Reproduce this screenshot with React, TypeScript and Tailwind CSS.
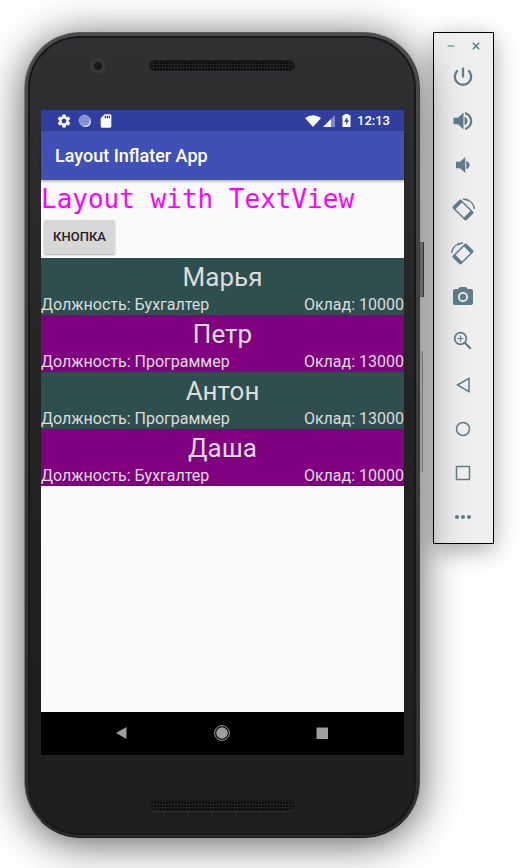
import React from "react";
import { MdPhotoCamera, MdSettings, MdSdCard, MdMoreHoriz } from "react-icons/md";

type Employee = { name: string; position: string; salary: number };

const employees: Employee[] = [
  { name: "Марья", position: "Бухгалтер", salary: 10000 },
  { name: "Петр", position: "Программер", salary: 13000 },
  { name: "Антон", position: "Программер", salary: 13000 },
  { name: "Даша", position: "Бухгалтер", salary: 10000 },
];

function SpeakerGrille() {
  return (
    <div className="h-3 w-[146px] rounded-full border-b border-[#333] bg-[#181818] p-0.5">
      <svg className="block h-2 w-full" aria-hidden="true">
        <defs>
          <pattern id="holes" width="3" height="3" patternUnits="userSpaceOnUse">
            <rect width="3" height="3" fill="#222" />
            <rect width="2" height="2" fill="#0b0b0b" />
          </pattern>
        </defs>
        <rect width="100%" height="8" rx="4" fill="url(#holes)" />
      </svg>
    </div>
  );
}

function StatusBar() {
  return (
    <div className="flex h-[21px] items-center justify-between bg-[#303f9f] pr-3.5 pl-[15px] text-white">
      <div className="flex items-center gap-1.5">
        <MdSettings size={16} />
        <svg width="14" height="14" viewBox="0 0 14 14">
          <circle cx="7.5" cy="7.5" r="5.5" fill="#d6daf4" />
          <circle cx="6.5" cy="6.5" r="5.3" fill="#858fcb" stroke="#a9b0de" />
        </svg>
        <MdSdCard size={16} />
      </div>
      <div className="flex items-center">
        <svg width="16" height="12" viewBox="0 0 16 12">
          <path d="M0 3Q8-2.6 16 3L8 12Z" fill="#fff" />
        </svg>
        <svg className="ml-0.5" width="12" height="12" viewBox="0 0 12 12">
          <path d="M12 0V12H0Z" fill="#7f88c8" />
          <path d="M8 4V12H0Z" fill="#fff" />
        </svg>
        <svg className="ml-[7px]" width="9" height="13" viewBox="0 0 9 13">
          <path d="M2.500 0H6.500V1.300H8.500V13H0.500V1.300H2.500Z" fill="#fff" />
          <path d="M5.300 3L2 7.700H4.200V11L7 6.300H5.300Z" fill="#303f9f" />
        </svg>
        <span className="ml-1.5 text-[13px] leading-5 font-medium">12:13</span>
      </div>
    </div>
  );
}

function EmployeeRow({ employee, color }: { employee: Employee; color: string }) {
  return (
    <li className={`${color} pb-px text-[#dcdcdc]`}>
      <h2 className="text-center text-[26px] leading-[38px]">{employee.name}</h2>
      <div className="flex justify-between text-base leading-[18px]">
        <span>Должность: {employee.position}</span>
        <span>Оклад: {employee.salary}</span>
      </div>
    </li>
  );
}

function NavigationBar() {
  return (
    <nav className="flex h-[43px] items-center justify-center gap-21 bg-black pr-px pb-px">
      <button aria-label="Back">
        <svg width="16" height="16" viewBox="0 0 16 16">
          <path d="M2 8L12.500 2V14Z" fill="#9e9e9e" />
        </svg>
      </button>
      <button aria-label="Home">
        <svg width="16" height="16" viewBox="0 0 16 16">
          <circle cx="8" cy="8" r="7.400" fill="none" stroke="#9e9e9e" />
          <circle cx="8" cy="8" r="5.800" fill="#9e9e9e" />
        </svg>
      </button>
      <button aria-label="Overview">
        <svg width="16" height="16" viewBox="0 0 16 16">
          <rect x="2.500" y="2.500" width="11.500" height="11.500" rx="0.500" fill="#9e9e9e" />
        </svg>
      </button>
    </nav>
  );
}

function Screen() {
  return (
    <div className="flex flex-1 flex-col bg-[#fafafa]">
      <StatusBar />
      <header className="z-10 flex h-[49px] items-center bg-[#3f51b5] pl-3.5 text-white shadow-[0_1px_3px_rgba(0,0,0,0.4)]">
        <h1 className="text-lg font-medium">Layout Inflater App</h1>
      </header>
      <p className="font-['DejaVu_Sans_Mono',monospace] text-[26px] leading-[39px] whitespace-nowrap text-[#ff00ff]">
        Layout with TextView
      </p>
      <div className="px-[3px] pt-px pb-1">
        <button className="h-[34px] w-[71px] rounded-xs bg-[#d6d7d7] text-[13px] font-medium text-[#212121] shadow-[0_1px_2px_rgba(0,0,0,0.3)]">
          КНОПКА
        </button>
      </div>
      <ul className="flex-1">
        {employees.map((employee, i) => (
          <EmployeeRow
            key={employee.name}
            employee={employee}
            color={i % 2 === 0 ? "bg-[#2f4f4f]" : "bg-[#800080]"}
          />
        ))}
      </ul>
      <NavigationBar />
    </div>
  );
}

function Phone() {
  return (
    <div className="relative flex min-h-[806px] min-w-0 flex-1 flex-col rounded-[56px] border border-t-[#5a5a5a] border-r-[#3f3c3d] border-b-[#1a1a1a] border-l-[#777] bg-linear-to-b from-[#4c4c4c] via-[#3d3b3c] to-[#2c2c2c] px-[3px] pt-[3px] pb-0.5 shadow-[0_5px_42px_rgba(0,0,0,0.65)]">
      <div className="absolute top-[209px] -right-[5px] h-[55px] w-1 border-r border-[#333] bg-[#666]" />
      <div className="absolute top-[318px] -right-1 h-[121px] w-[3px] border-r border-[#777] bg-[#999]" />
      <div className="relative flex flex-1 flex-col rounded-[52px] border-2 border-[#181818] bg-linear-to-b from-[#303032] via-[#222] to-[#1e1e1e] pr-2.5 pl-[11px]">
        <div className="absolute top-5 left-[60px] flex size-4 items-center justify-center rounded-full bg-[#383838]">
          <div className="size-2 rounded-full bg-[#1b171f]" />
        </div>
        <div className="flex h-[72px] justify-center pt-[22px] pr-0.5">
          <SpeakerGrille />
        </div>
        <Screen />
        <div className="flex h-[78px] items-center justify-center pt-[23px] pr-0.5">
          <SpeakerGrille />
        </div>
      </div>
    </div>
  );
}

function Outline({ children }: { children: React.ReactNode }) {
  return (
    <svg width="24" height="24" viewBox="0 0 24 24" fill="none" stroke="currentColor" strokeWidth="1.5">
      {children}
    </svg>
  );
}

function RotateIcon() {
  return (
    <>
      <g transform="rotate(-45 12 13)">
        <rect x="6.700" y="4" width="10.600" height="18" rx="1.200" />
        <path d="M6.700 5.500H17.300M6.700 20.500H17.300" strokeWidth="3.200" />
      </g>
      <path d="M12 1.800A11 11 0 0 1 23.300 12M12 1.800L18 4" strokeWidth="1.300" />
    </>
  );
}

const tools: { label: string; icon: React.ReactNode }[] = [
  {
    label: "Power",
    icon: (
      <Outline>
        <path d="M12 2.500V12.500M6.700 5.300A8.200 8.200 0 1 0 17.300 5.300" strokeWidth="2.300" />
      </Outline>
    ),
  },
  {
    label: "Volume up",
    icon: (
      <svg width="24" height="24" viewBox="0 0 24 24" fill="currentColor">
        <path d="M2.500 8.800V15.200H7L12.500 20.500V3.500L7 8.800Z" />
        <path d="M13.500 7.800V16.200C15.400 15.400 16.600 13.900 16.600 12S15.400 8.600 13.500 7.800Z" />
        <path d="M14 3V5.200C17 6 19 8.800 19 12S17 18 14 18.800V21C18.300 20 21.300 16.500 21.300 12S18.300 4 14 3Z" />
      </svg>
    ),
  },
  {
    label: "Volume down",
    icon: (
      <svg width="24" height="24" viewBox="0 0 24 24" fill="currentColor">
        <path d="M5 8.800V15.200H9L14.300 20V4L9 8.800Z" />
        <path d="M15.300 7.800V16.200C17.400 15.400 18.600 13.900 18.600 12S17.400 8.600 15.300 7.800Z" />
      </svg>
    ),
  },
  { label: "Rotate right", icon: <Outline><RotateIcon /></Outline> },
  {
    label: "Rotate left",
    icon: (
      <Outline>
        <g transform="translate(24 0) scale(-1 1)">
          <RotateIcon />
        </g>
      </Outline>
    ),
  },
  { label: "Take screenshot", icon: <MdPhotoCamera size={24} /> },
  {
    label: "Zoom",
    icon: (
      <Outline>
        <circle cx="9.500" cy="9.500" r="5.800" strokeWidth="1.700" />
        <path d="M9.500 6.500V12.500M6.500 9.500H12.500" strokeWidth="1.200" />
        <path d="M13.800 13.800L19.800 19.800" strokeWidth="2.300" />
      </Outline>
    ),
  },
  { label: "Back", icon: <Outline><path d="M6.500 12L18 5.300V18.700Z" /></Outline> },
  { label: "Home", icon: <Outline><circle cx="12" cy="12" r="6.500" /></Outline> },
  { label: "Overview", icon: <Outline><rect x="5.500" y="5.500" width="13" height="13" rx="0.500" /></Outline> },
  { label: "More", icon: <MdMoreHoriz size={24} /> },
];

function Toolbar() {
  return (
    <aside className="w-[61px] shrink-0 border border-black bg-[#efefef] pr-px pb-1 text-[#607d8b] shadow-[0_6px_24px_rgba(0,0,0,0.35)]">
      <div className="flex h-[22px] items-center justify-center gap-[13px] pt-1">
        <button aria-label="Minimize">
          <svg width="12" height="12" viewBox="0 0 12 12">
            <path d="M2.500 6H9.500" stroke="#90a4ae" strokeWidth="1.600" />
          </svg>
        </button>
        <button aria-label="Close">
          <svg width="12" height="12" viewBox="0 0 12 12">
            <path d="M2.800 2.800L9.200 9.200M9.200 2.800L2.800 9.200" stroke="currentColor" strokeWidth="1.500" />
          </svg>
        </button>
      </div>
      {tools.map((tool) => (
        <button key={tool.label} aria-label={tool.label} className="flex h-11 w-full items-center justify-center">
          {tool.icon}
        </button>
      ))}
    </aside>
  );
}

export default function App() {
  return (
    <main className="flex min-h-screen items-start gap-[13px] overflow-hidden bg-white pt-8 pr-7 pb-7 pl-6 font-[Roboto,sans-serif]">
      <Phone />
      <Toolbar />
    </main>
  );
}
